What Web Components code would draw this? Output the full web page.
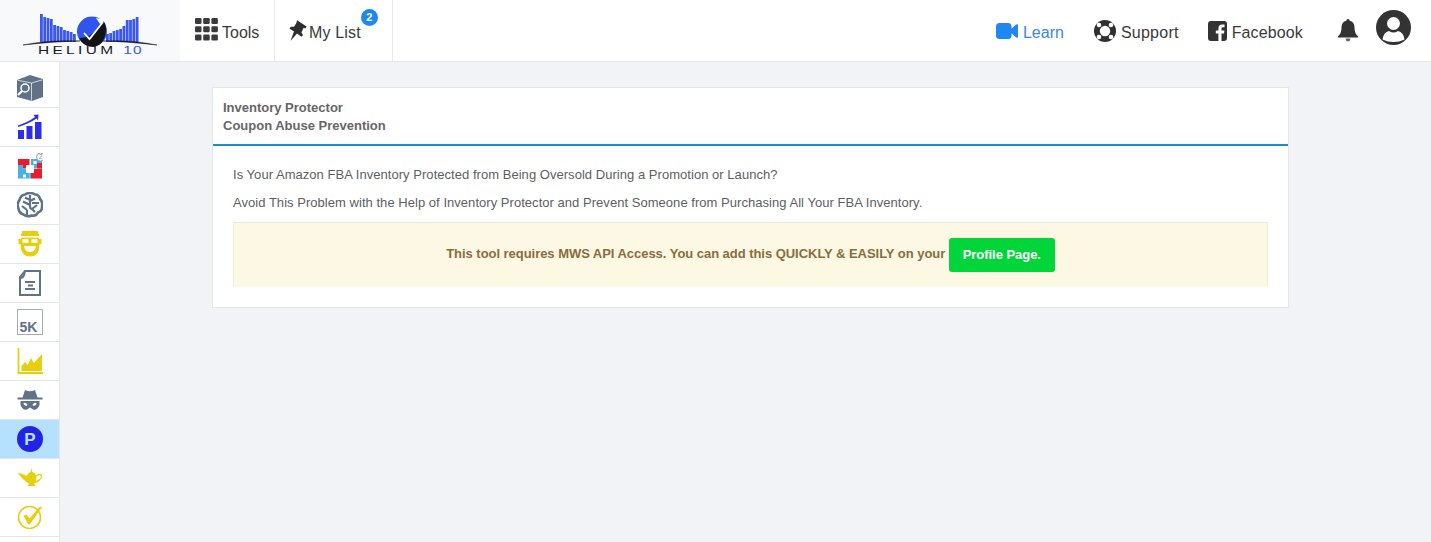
<!DOCTYPE html>
<html lang="en"><head><meta charset="utf-8"><title>Inventory Protector</title>
<style>
html,body{margin:0;padding:0;height:100%;background:#f1f3f7;overflow:hidden}
body{font-family:"Liberation Sans",Arial,sans-serif}
</style></head><body>
<hz-app>
  <hz-topbar slot="top"></hz-topbar>
  <hz-sidebar slot="side"></hz-sidebar>
  <hz-card slot="main" title1="Inventory Protector" title2="Coupon Abuse Prevention">
    <p>Is Your Amazon FBA Inventory Protected from Being Oversold During a Promotion or Launch?</p>
    <p>Avoid This Problem with the Help of Inventory Protector and Prevent Someone from Purchasing All Your FBA Inventory.</p>
    <hz-notice>This tool requires MWS API Access. You can add this QUICKLY &amp; EASILY on your <span slot="action">Profile Page.</span></hz-notice>
  </hz-card>
</hz-app>
<script>
function shell(el,html){el.attachShadow({mode:'open'}).innerHTML=html;}
customElements.define('hz-app',class extends HTMLElement{constructor(){super();shell(this,`<style>
:host{display:grid;grid-template-columns:60px 1fr;grid-template-rows:62px 1fr;width:1431px;height:542px;overflow:hidden}
.t{grid-column:1/3}.m{padding:25px 143px 0 152px}
</style><div class="t"><slot name="top"></slot></div><div><slot name="side"></slot></div><div class="m"><slot name="main"></slot></div>`)}});

const I={
grid:`<svg style="margin-bottom:6px" width="23" height="23" viewBox="0 0 23 23" fill="#3a3a3a"><rect x="0" y="0" width="6.5" height="6" rx="1.3"/><rect x="8.2" y="0" width="6.5" height="6" rx="1.3"/><rect x="16.4" y="0" width="6.5" height="6" rx="1.3"/><rect x="0" y="8.3" width="6.5" height="6" rx="1.3"/><rect x="8.2" y="8.3" width="6.5" height="6" rx="1.3"/><rect x="16.4" y="8.3" width="6.5" height="6" rx="1.3"/><rect x="0" y="16.6" width="6.5" height="6" rx="1.3"/><rect x="8.2" y="16.6" width="6.5" height="6" rx="1.3"/><rect x="16.4" y="16.6" width="6.5" height="6" rx="1.3"/></svg>`,
pin:`<svg style="margin-bottom:5px" width="18" height="21" viewBox="0 0 18 21" fill="#2e2e2e"><path d="M8 .3 17.6 6.6 16.4 8.4 14.6 7.8 12.4 12.6 14 15 12.4 16.8 8 13.6 1.5 21 5 11.6 .4 8.6 1.8 6.8 5 6.8 7.4 3Z"/></svg>`,
video:`<svg style="margin-bottom:4px" width="22" height="16" viewBox="0 0 22 16"><rect width="15.500" height="16" rx="3.500" fill="#1f87f0"/><path d="M15 6 20.200 1.500Q22 .6 22 2.200V13.800Q22 15.400 20.200 14.500L15 10Z" fill="#1f87f0"/></svg>`,
ring:`<svg style="margin-bottom:4px" width="22" height="22" viewBox="0 0 22 22"><circle cx="11" cy="11" r="11" fill="#303030"/><circle cx="11" cy="11" r="5.200" fill="#fff"/><g fill="#fff"><circle cx="5" cy="5" r="2.300"/><circle cx="17" cy="5" r="2.300"/><circle cx="5" cy="17" r="2.300"/><circle cx="17" cy="17" r="2.300"/></g></svg>`,
fb:`<svg style="margin-bottom:4px" width="19" height="20" viewBox="0 0 19 20"><path fill-rule="evenodd" fill="#333" d="M3 0H16Q19 0 19 3V17Q19 20 16 20H13.500V12.400H16L16.400 9.400H13.500V7.600Q13.500 6.200 15 6.200H16.500V3.600Q15.400 3.400 14.200 3.400 10.400 3.400 10.400 7.200V9.400H7.800V12.400H10.400V20H3Q0 20 0 17V3Q0 0 3 0Z"/></svg>`,
bell:`<svg width="22" height="23" viewBox="0 0 21 23" fill="#333"><path d="M10.500 0Q12.200 0 12.200 1.800 17 3 17 8.500 17 14.500 20.500 17.200V18.600H.5V17.200Q4 14.500 4 8.500 4 3 8.800 1.800 8.800 0 10.500 0Z"/><path d="M8 19.600H13Q12.600 22.400 10.500 22.400T8 19.600Z" opacity=".75"/></svg>`,
user:`<svg width="35" height="35" viewBox="0 0 35 35"><circle cx="17.500" cy="17.500" r="17.500" fill="#333"/><circle cx="17.500" cy="13.500" r="6.500" fill="#fff"/><path d="M6.500 29.500Q7.500 22 13 21 17.500 24 22 21 27.500 22 28.500 29.500 23.500 32 17.500 32T6.500 29.500Z" fill="#fff"/></svg>`
};
customElements.define('hz-logo',class extends HTMLElement{constructor(){super();
const L=[[40,14],[43.300,17],[46.600,18],[49.900,19],[53.200,25],[56.500,26],[59.800,27],[63.100,30],[66.400,31],[69.700,32],[73,34]];
const R=[[106,34],[109.300,33],[112.600,31],[115.900,30],[119.200,29],[122.500,26],[125.800,20],[129.100,20],[132.400,19],[135.700,17]];
const bars=[...L,...R].map(b=>`<rect x="${b[0]}" y="${b[1]}" width="2.800" height="${42-b[1]}"/>`).join('');
shell(this,`<style>:host{display:block;position:relative;width:180px;height:61px;background:#f8f9fb}
svg{position:absolute;left:0;top:0}
.n{position:absolute;left:38px;top:43.500px;font:400 11px/13px "Liberation Sans",sans-serif;letter-spacing:2.400px;color:#1a1a1a;white-space:nowrap;transform:scaleX(1.400);transform-origin:left}
.n b{font-weight:400;color:#3f55e6;margin-left:5px;letter-spacing:.8px}</style>
<svg width="180" height="61" viewBox="0 0 180 61"><g fill="#3a57f2">${bars}</g>
<circle cx="92" cy="31.500" r="15" fill="#2f55ee"/>
<path d="M79 38Q84 47 94 47 106 44 106 28 105.500 23 103 20 100 26 92 34 88 38 79 38Z" fill="#141414"/>
<path d="M84 33 89.500 39 103 22" fill="none" stroke="#fff" stroke-width="1.800"/>
<path d="M96 18 106 20 100 24Z" fill="#fff"/>
<path d="M23 45Q50 39.500 80 41 55 41.500 23 45ZM157 45Q130 39.500 103 41 125 41.500 157 45Z" fill="#1a1a1a" stroke="#1a1a1a" stroke-width=".5"/></svg>
<div class="n">HELIUM<b>10</b></div>`)}});
customElements.define('hz-nav',class extends HTMLElement{constructor(){super();shell(this,`<style>
:host{display:inline-flex;align-items:center;gap:var(--g,4px);font:16px/20px "Liberation Sans",Arial,sans-serif;color:#3a3a3a;height:61px;position:relative;box-sizing:border-box;padding-top:4px}
::slotted(svg){display:block}
</style><slot name="i"></slot><slot></slot>`)}});
customElements.define('hz-topbar',class extends HTMLElement{constructor(){super();shell(this,`<style>
:host{display:flex;height:62px;box-sizing:border-box;background:#fff;border-bottom:1px solid #e4e6ea}
.a{border-right:1px solid #e8e9ec;display:flex;position:relative}
.tools{width:64px;padding:0 15px;--g:4px;white-space:nowrap}
.list{width:88px;padding:0 15px 0 14px;--g:2px;white-space:nowrap;letter-spacing:.15px}
.badge{position:absolute;left:86px;top:9px;width:17px;height:17px;border-radius:50%;background:#1f87f0;color:#fff;font:700 11px/17px "Liberation Sans",sans-serif;text-align:center}
.sp{flex:1}.r{display:flex;align-items:center}
.learn{--g:5px;color:#3b86e6;margin-right:30px}
.sup{margin-right:29px;--g:5px;letter-spacing:.25px}.fb{margin-right:34px;--g:5px;letter-spacing:.13px}.bell{margin-right:17px;display:flex;margin-top:-1px}
.usr{margin-right:21px;display:flex;margin-top:-6px}
</style>
<hz-logo></hz-logo>
<div class="a tools"><hz-nav>${I.grid.replace('<svg','<svg slot="i"')}Tools</hz-nav></div>
<div class="a list"><hz-nav>${I.pin.replace('<svg','<svg slot="i"')}My List</hz-nav><span class="badge">2</span></div>
<div class="sp"></div>
<div class="r">
<hz-nav class="learn">${I.video.replace('<svg','<svg slot="i"')}Learn</hz-nav>
<hz-nav class="sup">${I.ring.replace('<svg','<svg slot="i"')}Support</hz-nav>
<hz-nav class="fb">${I.fb.replace('<svg','<svg slot="i"')}Facebook</hz-nav>
<span class="bell">${I.bell}</span><span class="usr">${I.user}</span></div>`)}});

const G='#5f7287',B='#2d2fe8',Y='#e6cf0c',RD='#e81e2c',BL='#45b3e6';
const S=[
`<svg viewBox="0 0 26 26"><path d="M13 0 26 4V22L15 26 0 22V5Z" fill="${G}"/><path d="M14.500 8V25.500M14.500 8 25.500 4.800M14.500 8 .5 5.200" stroke="#fff" stroke-width=".7" fill="none"/><circle cx="8" cy="13" r="4" fill="${G}" stroke="#fff" stroke-width="1.500"/><path d="M5 16 1 20" stroke="#fff" stroke-width="2.200"/></svg>`,
`<svg viewBox="0 0 26 26"><g fill="${B}"><rect x="1" y="16" width="6" height="9"/><rect x="9.500" y="12" width="6" height="13"/><rect x="18" y="8" width="6.500" height="17"/><path d="M21.500 .6 16.500 1 18 3 C12 7.500 6 9.500 1 11.500V13 C7 11 14 8.500 19.500 4.500L21 6.500Z"/></g></svg>`,
`<svg viewBox="0 0 26 26"><rect x="1" y="6" width="11.500" height="9.500" fill="${RD}"/><rect x="14" y="6" width="11" height="9.500" fill="${BL}"/><rect x="1" y="16" width="11.500" height="9.500" fill="${BL}"/><rect x="14" y="16" width="11" height="9.500" fill="${RD}"/><rect x="20" y="10" width="5" height="5.500" fill="${RD}"/><rect x="1" y="12" width="5" height="4" fill="${BL}"/><rect x="9" y="12" width="8" height="8" fill="#fff"/><rect x="16.500" y="8" width="3" height="3" fill="#fff"/><rect x="6" y="21.500" width="3" height="3" fill="#fff"/><rect x="12.500" y="20" width="1.500" height="5.500" fill="${BL}"/><circle cx="23.500" cy="4" r="4" fill="#fff" stroke="#9aa0a8"/><text x="23.500" y="6.400" font-size="6.500" text-anchor="middle" fill="#8a8f96" font-family="Liberation Sans">2</text></svg>`,
`<svg viewBox="0 0 26 26"><path d="M8 2.500Q13 -.5 18 2.500 22 2.500 23 7 26 10 25 14 25.500 19 21 20.500 19 24.500 14.500 23.500 10 25.500 6.500 22.500 2 21 1.500 16.500 -.5 12 2.500 8 3.500 3 8 2.500Z" fill="none" stroke="${G}" stroke-width="2.600"/><path d="M13 3V14M13 8 8 5.500M13 13 6 9.500M10 18 5 14M10 18 10 23M13 9 18 6.500M15 17 20 13M15 17 18 20 M15 11 22 11M13 14Q13 17 15 17" stroke="${G}" stroke-width="2.200" fill="none"/></svg>`,
`<svg viewBox="0 0 26 26"><path d="M5 0H21V2.500H22V8H24.500V13H22.500Q22.500 25.500 13 25.500T3.500 13H1.500V8H4V2.500H5Z" fill="${Y}"/><rect x="4" y="5" width="18" height="1.600" fill="#fff"/><rect x="5.500" y="8.200" width="6" height="3.600" fill="#fff"/><rect x="14.500" y="8.200" width="6" height="3.600" fill="#fff"/><path d="M7 15H19Q18 21 13 21T7 15Z" fill="#fff"/></svg>`,
`<svg viewBox="0 0 26 26"><path d="M8 1H23V25H3V7Z" fill="none" stroke="${G}" stroke-width="2"/><path d="M3 7.500Q7 9 8 1" fill="none" stroke="${G}" stroke-width="2"/><path d="M8 12H18M11 15.500H16M8 19H18" stroke="${G}" stroke-width="2"/></svg>`,
`<svg viewBox="0 0 26 26"><rect x=".5" y=".5" width="25" height="25" fill="#fff" stroke="#a6adb8"/><text x="2.500" y="23" font-size="14" font-weight="700" font-family="Liberation Sans" fill="${G}">5K</text></svg>`,
`<svg viewBox="0 0 26 26"><path d="M1.500 0V25H26" fill="none" stroke="${Y}" stroke-width="1.800"/><path d="M4.500 23V18L8 14 10.500 17 14 10 17 15 19.500 12 25 6V23Z" fill="${Y}"/></svg>`,
`<svg viewBox="0 0 26 26"><path d="M8 3 Q13 5.500 18 3L20.500 10.500H25.500V12.500H.5V10.500H5.500Z" fill="${G}"/><path d="M3.500 14H22.500V18Q20 24 16 22.500L13 20.500 10 22.500Q6 24 3.500 18Z" fill="${G}"/><path d="M6.500 16Q8.500 15 10.500 17.500L9.500 19 7 18ZM19.500 16Q17.500 15 15.500 17.500L16.500 19 19 18Z" fill="#fff"/></svg>`,
`<svg viewBox="0 0 26 26"><circle cx="13" cy="13" r="13" fill="#2323e6"/><text x="13" y="19" font-size="17" font-weight="700" font-family="Liberation Sans" text-anchor="middle" fill="#b5e1ff">P</text></svg>`,
`<svg viewBox="0 0 26 26"><path d="M.5 8Q7 9 9.500 11 11 7.500 14 6.800 13 5 14.500 4 16 5 15 6.800 18 7.500 19 10.500 21 8 24 9 26 11 24 14 22 17 17 18.500L18.500 21H10.500L12 18.500Q7 16 .5 8Z" fill="${Y}"/><path d="M19.500 11.500Q21.500 9.500 23.500 10.500 24.500 12 22.500 14L19 16Z" fill="#fff"/></svg>`,
`<svg viewBox="0 0 26 26"><circle cx="12.500" cy="13.500" r="11" fill="none" stroke="${Y}" stroke-width="1.600"/><path d="M6.500 12 9.500 10.500 12.500 14.500 22 3.500 25.500 2.500 13 20 11 20Z" fill="${Y}"/></svg>`
];
customElements.define('hz-side-item',class extends HTMLElement{constructor(){super();shell(this,`<style>
:host{display:flex;align-items:center;justify-content:center;height:38px;border-bottom:1px solid #e2e4e8;box-sizing:content-box}
:host([active]){background:#b5e1ff}
::slotted(svg){width:26px;height:26px;display:block}
</style><slot></slot>`)}});
customElements.define('hz-sidebar',class extends HTMLElement{constructor(){super();shell(this,`<style>
:host{display:block;width:60px;height:480px;background:#fff;box-sizing:border-box;border-right:1px solid #e4e6ea;padding-top:7px;overflow:hidden}
</style>${S.map((s,i)=>`<hz-side-item${i==9?' active':''}>${s}</hz-side-item>`).join('')}`)}});
customElements.define('hz-card',class extends HTMLElement{constructor(){super();shell(this,`<style>
:host{display:block;width:1077px;height:221px;box-sizing:border-box;background:#fff;border:1px solid #e4e6ea;font:13px/18px "Liberation Sans",Arial,sans-serif;color:#555}
.h{height:58px;box-sizing:border-box;padding:11px 10px 0;font-weight:700;color:#666;border-bottom:2px solid #1a8fd0}
.b{padding:20px 20px 0}
::slotted(p){margin:0 0 10px!important;font-size:13px;line-height:18px;color:#5c5f63;letter-spacing:.037px}
</style><div class="h"><div id="a"></div><div id="b"></div></div><div class="b"><slot></slot></div>`);
this.shadowRoot.getElementById('a').textContent=this.getAttribute('title1');
this.shadowRoot.getElementById('b').textContent=this.getAttribute('title2');}});
customElements.define('hz-notice',class extends HTMLElement{constructor(){super();shell(this,`<style>
:host{display:flex;align-items:center;justify-content:center;height:65px;box-sizing:border-box;background:#fcf8e3;border:1px solid #f0ecd8;border-bottom:0;border-top:1px solid #e8e8e0;margin-top:10px;font:700 13px/18px "Liberation Sans",Arial,sans-serif;color:#8a6d3b;white-space:pre;letter-spacing:-.04px}
.t{margin-bottom:3px}
.btn{display:inline-block;width:106px;height:34px;line-height:34px;text-align:center;background:#00d639;border-radius:3px;color:#fff}
</style><span class="t"><slot></slot></span><span class="btn"><slot name="action"></slot></span>`)}});
</script></body></html>
